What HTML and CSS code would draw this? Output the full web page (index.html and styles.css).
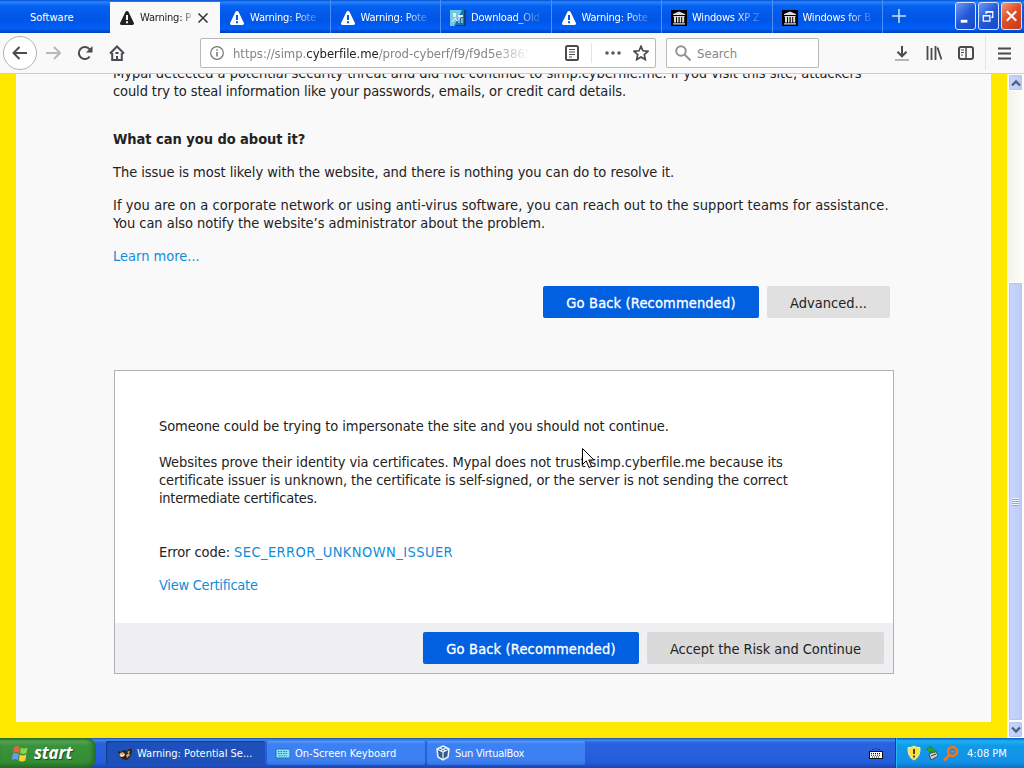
FILE: index.html
```
<!DOCTYPE html>
<html lang="en">
<head>
  <meta charset="UTF-8">
  <meta name="viewport" content="width=device-width, initial-scale=1.0">
  <title>Warning: Potential Security Risk Ahead</title>
  <link rel="stylesheet" href="styles.css">
</head>
<body>
<svg class="sprite" width="0" height="0">
  <symbol id="warn" viewBox="0 0 16 16">
    <path fill="currentColor" fill-rule="evenodd" d="M8 1c-.7 0-1.300.3-1.600 1L1.200 12.800C.6 14 1.200 15 2.600 15h10.800c1.400 0 2-1 1.400-2.200L9.600 2C9.300 1.300 8.700 1 8 1zM7 5h2v5H7zM7 11.300h2v2H7z"/>
  </symbol>
  <symbol id="archive" viewBox="0 0 16 16">
    <rect width="16" height="16" fill="#000"/>
    <path fill="#ddd" d="M8 1.500l6 2.500v1H2V4zM2.500 6h11v1h-11zM3 7h2v5.500H3zM6 7h1.500v5.500H6zM8.700 7h1.500v5.500H8.700zM11.200 7h2v5.500h-2zM2 13.300h12v1.200H2z"/>
  </symbol>
</svg>

<header class="tabbar">
  <div class="tab first"><span>Software</span></div>
  <div class="tab active">
    <svg class="icon"><use href="#warn"/></svg><span class="label">Warning: P</span>
    <svg class="close" viewBox="0 0 12 12"><path d="M1.500 1.500l9 9M10.500 1.500l-9 9"/></svg>
  </div>
  <div class="tab"><svg class="icon"><use href="#warn"/></svg><span class="label">Warning: Pote</span></div>
  <div class="tab"><svg class="icon"><use href="#warn"/></svg><span class="label">Warning: Pote</span></div>
  <div class="tab">
    <svg class="icon" viewBox="0 0 16 16"><rect width="16" height="16" fill="#1b71ad"/><path fill="#73c8e5" d="M0 0h12L4 16H0z"/><path fill="#d9f1e8" d="M3 3h3v4H3zM8 5h5v2H8z"/><path d="M2 12l3-4 2 3 5-6M9 7v6M12 8v5" fill="none" stroke="#e6f8ff"/><path fill="#123e70" d="M14 0h2v16H6v-1h8z"/></svg>
    <span class="label">Download_Old</span>
  </div>
  <div class="tab"><svg class="icon"><use href="#warn"/></svg><span class="label">Warning: Pote</span></div>
  <div class="tab"><svg class="icon"><use href="#archive"/></svg><span class="label">Windows XP Z</span></div>
  <div class="tab"><svg class="icon"><use href="#archive"/></svg><span class="label">Windows for B</span></div>
  <svg class="newtab" viewBox="0 0 14 14"><path d="M7 0v14M0 7h14"/></svg>
  <div class="winbuttons">
    <span class="win"><svg viewBox="0 0 20 26"><path d="M5 18.500h7" stroke-width="3"/></svg></span>
    <span class="win"><svg viewBox="0 0 20 26"><path d="M4.500 12.500h7v6h-7zM4 13h8M7.500 11V8.500h7v6H13M7 9h8" stroke-width="1.300"/></svg></span>
    <span class="win red"><svg viewBox="0 0 20 26"><path d="M5 8l10 10M15 8L5 18" stroke-width="2.200"/></svg></span>
  </div>
</header>

<nav class="toolbar">
  <span class="back"><svg viewBox="0 0 16 16"><path d="M15 8H1.500M7.500 2L1.500 8l6 6"/></svg></span>
  <svg class="forward" viewBox="0 0 16 16"><path d="M1 8h13.500M9 2l6 6-6 6"/></svg>
  <svg class="reload" viewBox="0 0 16 16"><path d="M12.700 11.500A6 6 0 1 1 12.500 4.200"/><path class="fill" d="M15.500 1v6.500H9z"/></svg>
  <svg class="home" viewBox="0 0 16 16"><path d="M1 8.500L8 1.500l7 7M3.200 8v7h9.600V8M8 15v-4" stroke-width="2"/><path d="M6.500 8h3" stroke-width="2"/></svg>
  <div class="urlbar">
    <svg class="info" viewBox="0 0 14 14"><circle cx="7" cy="7" r="6.300"/><path d="M7 6v4.500M7 3.300v1.400" stroke-width="1.500"/></svg>
    <span class="url">https://simp.<b>cyberfile.me</b>/prod-cyberf/f9/f9d5e3865</span>
    <svg class="reader" viewBox="0 0 14 16"><rect x="1" y="1" width="12" height="14" rx="1.500" stroke-width="2"/><path d="M4 4.500h6M4 7h6M4 9.500h6M4 12h3" stroke-width="1"/></svg>
    <i class="divider"></i>
    <svg class="dots" viewBox="0 0 16 4"><circle cx="2" cy="2" r="1.800"/><circle cx="8" cy="2" r="1.800"/><circle cx="14" cy="2" r="1.800"/></svg>
    <svg class="star" viewBox="0 0 16 16"><path d="M8 1.300l2 4.500 5 .5-3.700 3.300 1 5L8 12l-4.300 2.600 1-5L1 6.300l5-.5z" stroke-width="1.700"/></svg>
  </div>
  <div class="searchbar">
    <svg viewBox="0 0 16 16"><circle cx="6" cy="6" r="4.800"/><path d="M9.500 9.500L15.500 15.500"/></svg>
    <span>Search</span>
  </div>
  <svg class="download" viewBox="0 0 16 16"><path d="M8 1v10M3.500 6.800L8 11.300l4.500-4.500"/><path d="M1 15h14" stroke-width="1.500" opacity=".5"/></svg>
  <svg class="library" viewBox="0 0 16 16"><path d="M1.500 1v14M5.500 3v12M9.500 1v14M11.500 2.500L15.500 14.500" stroke-width="1.800"/></svg>
  <svg class="sidebar" viewBox="0 0 16 14"><rect x="1" y="1" width="14" height="12" rx="2"/><path d="M8 1v12" stroke-width="1.500"/><path d="M3 4h3M3 6.500h3M3 9h2" stroke-width="1"/></svg>
  <i class="divider tall"></i>
  <svg class="menu" viewBox="0 0 13 13"><path d="M0 1.500h13M0 6.500h13M0 11.500h13"/></svg>
</nav>

<div class="viewport">
  <main class="page">
    <p class="intro"><span class="tight">Mypal detected a potential security threat and did not continue to simp.cyberfile.me. If you visit this site, attackers</span><br><span class="tighter">could try to steal information like your passwords, emails, or credit card details.</span></p>
    <h2>What can you do about it?</h2>
    <p class="tight">The issue is most likely with the website, and there is nothing you can do to resolve it.</p>
    <p><span class="loose">If you are on a corporate network or using anti-virus software, you can reach out to the support teams for assistance.</span><br><span class="tight">You can also notify the website’s administrator about the problem.</span></p>
    <p><a>Learn more...</a></p>
    <div class="buttons">
      <button class="primary">Go Back (Recommended)</button>
      <button class="advanced">Advanced...</button>
    </div>
    <section class="panel">
      <div class="details">
        <p>Someone could be trying to impersonate the site and you should not continue.</p>
        <p class="certs">Websites prove their identity via certificates. Mypal does not trust simp.cyberfile.me because its<br><span class="tighter">certificate issuer is unknown, the certificate is self-signed, or the server is not sending the correct</span><br><span class="tightest">intermediate certificates.</span></p>
        <p>Error code: <a class="code">SEC_ERROR_UNKNOWN_ISSUER</a></p>
        <p><a class="tightest">View Certificate</a></p>
      </div>
      <div class="buttons">
        <button class="primary">Go Back (Recommended)</button>
        <button class="accept">Accept the Risk and Continue</button>
      </div>
    </section>
  </main>
  <div class="scrollbar">
    <span class="arrow"><svg viewBox="0 0 10 8"><path d="M1 6.500l4-4 4 4"/></svg></span>
    <span class="track"></span>
    <span class="thumb"><i></i></span>
    <span class="arrow"><svg viewBox="0 0 10 8"><path d="M1 1.500l4 4 4-4"/></svg></span>
  </div>
</div>

<footer class="taskbar">
  <div class="start">
    <svg viewBox="0 0 18 17"><path fill="#e8643a" d="M3 2q3-2 6 0L8 8q-3-2-6 0z"/><path fill="#8fd14b" d="M10 2.500q3 2 6.500 0L15.500 8q-3 2-6.500 0z"/><path fill="#6b9dee" d="M1.800 9q3-2 6 0l-1 6q-3-2-6 0z"/><path fill="#fbd13c" d="M8.800 9.500q3 2 6.500 0l-1 6q-3.500 2-6.500 0z"/></svg>
    <span>start</span>
  </div>
  <div class="task current">
    <svg viewBox="0 0 16 16"><path fill="#2d211c" d="M1 5l3 1 3-2 3 1 4-3 1 4-2 5-3 3-5-1-3-4z"/><path fill="#d9a25f" d="M3 7l3-1 2 2-2 3-3-2zM9 9l3-2 1 2-3 3z"/><path fill="#f5eee1" d="M2 8l3 1 3-1-1 2-3 1zM10 6l3-1-1 2z"/></svg>
    <span>Warning: Potential Se...</span>
  </div>
  <div class="task">
    <svg viewBox="0 0 16 16"><rect x="1" y="4" width="14" height="9" rx="1" fill="#8de1f5" stroke="#1c75b8"/><path d="M3 6.500h10M3 8.500h10M4 10.800h8" stroke="#2785b5" stroke-dasharray="1.500 1"/></svg>
    <span>On-Screen Keyboard</span>
  </div>
  <div class="task">
    <svg viewBox="0 0 16 16"><path d="M8 1l6 3-1 8-5 3-5-3-1-8z" fill="#345a89" stroke="#e8f6ff" stroke-width="1.500"/><path d="M2 4l6 3 6-3M8 7v8M5 3l6 3M11 3L5 6" fill="none" stroke="#e8f6ff" stroke-width="1.200"/></svg>
    <span class="vbox">Sun VirtualBox</span>
  </div>
  <svg class="keyboard" viewBox="0 0 14 12"><path d="M3 2.500h2l1-1h2l1 1h3" fill="none" stroke="#10245c" stroke-dasharray="1 1"/><rect x=".5" y="4.500" width="13" height="7" fill="#fff" stroke="#111"/><path d="M2 6.500h10M2 8.200h10M3 10h8" stroke="#111" stroke-dasharray="1 1"/></svg>
  <div class="tray">
    <svg viewBox="0 0 14 16"><path d="M7 1q3 2 6 1.500Q13.500 12 7 15 .5 12 1 2.500 4 3 7 1z" fill="#ffe23a" stroke="#e8edc5"/><path d="M7 4v5M7 10.500v2" stroke="#333" stroke-width="1.800"/></svg>
    <svg viewBox="0 0 14 16"><path fill="#cbd0cc" stroke="#44545c" d="M4 9l7-3 2 5-7 4z"/><path fill="#2fa52f" stroke="#16731e" stroke-width=".5" d="M1 4l5-3v2q4 0 4 5L6 6v2z"/><path d="M6 11l5-2" stroke="#34454e"/></svg>
    <svg viewBox="0 0 16 16"><circle cx="9.500" cy="6.500" r="4.500" fill="#3986b8" stroke="#e8782a" stroke-width="2.500"/><path d="M6.500 10L1 15.500" stroke="#e8782a" stroke-width="3"/><path d="M7.500 6.500h4" stroke="#e8782a" stroke-width="1.500"/></svg>
    <span>4:08 PM</span>
  </div>
</footer>

<svg class="cursor" viewBox="0 0 13 21"><path d="M.5.5v16l3.700-3.600 2.800 6.600 2.600-1.100-2.800-6.400h5.200z" fill="#fff" stroke="#000"/></svg>
</body>
</html>
```
FILE: styles.css
```
* {
    box-sizing: border-box;
}

body {
    margin: 0;
    width: 1024px;
    height: 768px;
    overflow: hidden;
    display: flex;
    flex-direction: column;
    position: relative;
    font-family: "DejaVu Sans Condensed", "Noto Sans", sans-serif;
    color: #222;
    white-space: nowrap;
}

svg {
    display: block;
    flex: none;
}

.sprite {
    position: absolute;
}

/* tabs */
.tabbar {
    height: 33px;
    flex: none;
    display: flex;
    background: linear-gradient(#0a4fce, #2386ff 2px, #0560f0 6px, #0055e5 20px, #0060fa 29px, #0144bd 32px);
    font-size: 11px;
    color: #fff;
}

.tab {
    width: 110.5px;
    flex: none;
    display: flex;
    align-items: center;
    padding: 2px 10px 0 9px;
    border-right: 1px solid #4a91fb;
}

.tab.first {
    width: 110px;
    padding-left: 30px;
    border: none;
}

.tab.active {
    width: 110px;
    margin-top: 2px;
    padding-top: 0;
    background: #f9f9fa;
    color: #222;
    border: none;
}

.tab .icon {
    width: 16px;
    height: 16px;
}

.label {
    width: 72px;
    margin-left: 5px;
    letter-spacing: -0.2px;
    -webkit-mask-image: linear-gradient(to right, #000 44px, transparent 72px);
    mask-image: linear-gradient(to right, #000 44px, transparent 72px);
}

.active .label {
    width: 53px;
    -webkit-mask-image: linear-gradient(to right, #000 42px, transparent 55px);
    mask-image: linear-gradient(to right, #000 42px, transparent 55px);
}

.close {
    width: 12px;
    height: 12px;
    margin-left: 4px;
    stroke: #333;
    stroke-width: 1.5;
}

.newtab {
    width: 14px;
    height: 14px;
    margin: 9px 0 0 9px;
    stroke: #c5e2ff;
    stroke-width: 1.6;
}

.winbuttons {
    display: flex;
    gap: 2px;
    margin: 2px 2px 0 auto;
}

.win {
    width: 21px;
    height: 28px;
    border: 1px solid #d7e5ff;
    border-radius: 3px;
    background: linear-gradient(135deg, #6d9af3, #2257d9 50%, #1849c5);
}

.win svg {
    width: 19px;
    height: 26px;
    fill: none;
    stroke: #fff;
}

.win.red {
    background: linear-gradient(135deg, #f29a7d, #e04e29 45%, #c43a16);
}

/* toolbar */
.toolbar {
    height: 41px;
    flex: none;
    display: flex;
    align-items: center;
    padding-left: 3px;
    background: #f9f9fa;
    border-bottom: 1px solid #ccc;
}

.toolbar svg {
    width: 16px;
    height: 16px;
    fill: none;
    stroke: #4a4a4f;
    stroke-width: 2;
}

.toolbar .back {
    width: 34px;
    height: 34px;
    border: 1px solid #b2b2b4;
    border-radius: 50%;
    background: #fff;
    display: flex;
    align-items: center;
    justify-content: center;
}

.toolbar .forward {
    margin-left: 8px;
    stroke: #b8b8ba;
}

.toolbar .reload {
    margin-left: 16px;
}

.toolbar .reload .fill {
    fill: #4a4a4f;
    stroke: none;
}

.toolbar .home {
    margin-left: 16px;
}

.urlbar,
.searchbar {
    height: 30px;
    border: 1px solid #b8b8b9;
    border-radius: 2px;
    background: #fff;
    display: flex;
    align-items: center;
    font-size: 13px;
    color: #858585;
}

.urlbar {
    width: 456px;
    margin-left: 75px;
    padding-left: 9px;
}

.toolbar .info {
    width: 14px;
    height: 14px;
    stroke: #737373;
    stroke-width: 1.2;
}

.url {
    width: 297px;
    margin-left: 9px;
    letter-spacing: -0.04px;
    -webkit-mask-image: linear-gradient(to right, #000 260px, transparent 297px);
    mask-image: linear-gradient(to right, #000 260px, transparent 297px);
}

.url b {
    font-weight: normal;
    color: #222;
}

.toolbar .reader {
    width: 14px;
    margin-left: 35px;
}

.divider {
    width: 1px;
    height: 20px;
    margin-left: 12px;
    background: #e3e3e3;
}

.toolbar .dots {
    height: 4px;
    margin-left: 13px;
    fill: #5a5a5e;
    stroke: none;
}

.toolbar .star {
    margin-left: 12px;
}

.searchbar {
    width: 153px;
    margin-left: 10px;
    padding-left: 8px;
}

.searchbar span {
    margin-left: 6px;
}

.searchbar svg {
    stroke: #929292;
}

.toolbar .download {
    margin-left: 75px;
}

.toolbar .library,
.toolbar .sidebar {
    margin-left: 16px;
}

.toolbar .sidebar {
    height: 14px;
}

.divider.tall {
    height: 34px;
    margin-left: 11px;
}

.toolbar .menu {
    width: 13px;
    height: 13px;
    margin-left: 12px;
}

/* page */
.viewport {
    height: 664px;
    flex: none;
    display: flex;
    background: #ffe900;
    overflow: hidden;
}

.page {
    width: 975px;
    height: 648px;
    margin-left: 16px;
    padding: 0 97px;
    background: #f9f9fa;
    font-size: 14.5px;
    line-height: 18px;
}

.page p {
    margin: 0 0 15px;
}

.page .intro {
    margin: -10px 0 30px;
}

.page h2 {
    margin: 0 0 15px;
    font-size: 14.5px;
    line-height: 18px;
    letter-spacing: -0.04px;
}

.page a {
    color: #118ddb;
}

.tight {
    letter-spacing: -0.04px;
}

.tighter {
    letter-spacing: -0.1px;
}

.tightest {
    letter-spacing: -0.26px;
}

.loose {
    letter-spacing: 0.067px;
}

.code {
    letter-spacing: 0.43px;
}

.buttons {
    display: flex;
    justify-content: flex-end;
    gap: 8px;
    padding: 6px 4px 0 0;
}

button {
    height: 32px;
    padding: 1px 0 0;
    border: none;
    border-radius: 2px;
    background: #e0e0e1;
    font: inherit;
    color: #222;
}

.primary {
    width: 216px;
    background: #0060df;
    color: #fff;
    letter-spacing: 0.15px;
    -webkit-text-stroke: 0.3px #fff;
}

.advanced {
    width: 123px;
}

.panel {
    width: 780px;
    height: 304px;
    margin: 52px 0 0 1px;
    border: 1px solid #b1b1b3;
    background: #fff;
}

.details {
    height: 252px;
    padding: 46px 44px 0;
    letter-spacing: -0.07px;
}

.details .certs {
    margin: 18px 0 36px;
}

.panel .buttons {
    height: 50px;
    padding: 9px 9px 0 0;
    background: #f0f0f2;
}

.accept {
    width: 237px;
    background: #dadadb;
    letter-spacing: -0.06px;
}

/* scrollbar */
.scrollbar {
    width: 17px;
    margin-left: 16px;
    display: flex;
    flex-direction: column;
    background: linear-gradient(to right, #f2f2e8, #fefefb);
}

.arrow,
.thumb {
    margin: 0 1px;
    border: 1px solid #fff;
    border-radius: 2px;
    background: linear-gradient(to right, #c9d6fd, #bccbf7);
    box-shadow: inset 0 0 0 1px #b5c5ef;
    display: flex;
    align-items: center;
    justify-content: center;
}

.arrow {
    height: 17px;
}

.arrow svg {
    width: 10px;
    height: 8px;
    fill: none;
    stroke: #4d6185;
    stroke-width: 2.4;
}

.track {
    height: 191px;
}

.thumb {
    flex: 1;
}

.thumb i {
    width: 7px;
    height: 8px;
    background: repeating-linear-gradient(#eef4fe 0 1px, #8ca6e8 1px 2px);
}

/* taskbar */
.taskbar {
    height: 30px;
    flex: none;
    display: flex;
    background: linear-gradient(#1f4a9f, #3f8af0 2px, #2a62de 5px, #245ddb 24px, #1a45b5 30px);
    font-size: 11px;
    color: #fff;
}

.start {
    width: 96px;
    display: flex;
    align-items: center;
    padding-left: 11px;
    border-radius: 0 9px 9px 0;
    background: linear-gradient(#28682a, #55a653 3px, #3a923b 8px, #348d34 24px, #246e26);
    box-shadow: inset -3px 0 4px #236a2a;
    font: italic bold 17px/1 "Open Sans", sans-serif;
    letter-spacing: -0.2px;
    text-shadow: 1px 1px 1px #1c4a1c;
}

.start svg {
    width: 18px;
    height: 17px;
    margin-right: 5px;
}

.start span {
    margin-top: -1px;
}

.task {
    width: 158px;
    height: 24px;
    margin: 3px 0 0 2px;
    padding-left: 8px;
    display: flex;
    align-items: center;
    border-radius: 2px;
    background: linear-gradient(#5b98fb, #3c81f3 3px, #3c7ff0 20px, #3570dd);
}

.task.current {
    width: 159px;
    margin-left: 10px;
    padding: 1px 0 0 11px;
    background: #1d50b8;
    box-shadow: inset 1px 1px 1px #123b87;
}

.task svg {
    width: 16px;
    height: 16px;
    margin-right: 4px;
}

.vbox {
    letter-spacing: -0.25px;
}

.keyboard {
    width: 14px;
    height: 12px;
    margin: 9px 12px 0 auto;
}

.tray {
    width: 129px;
    display: flex;
    align-items: center;
    padding-left: 11px;
    border-left: 1px solid #123f92;
    background: linear-gradient(#0c59b9, #1cb1f4 3px, #109ae8 8px, #1290e8 24px, #0d72c0);
    box-shadow: inset 1px 0 #2ab4f5;
}

.tray svg {
    width: 14px;
    height: 16px;
    margin-right: 4px;
}

.tray svg:nth-child(3) {
    width: 16px;
    margin-right: 8px;
}

.cursor {
    position: absolute;
    left: 582px;
    top: 448px;
    width: 13px;
    height: 21px;
}
```
